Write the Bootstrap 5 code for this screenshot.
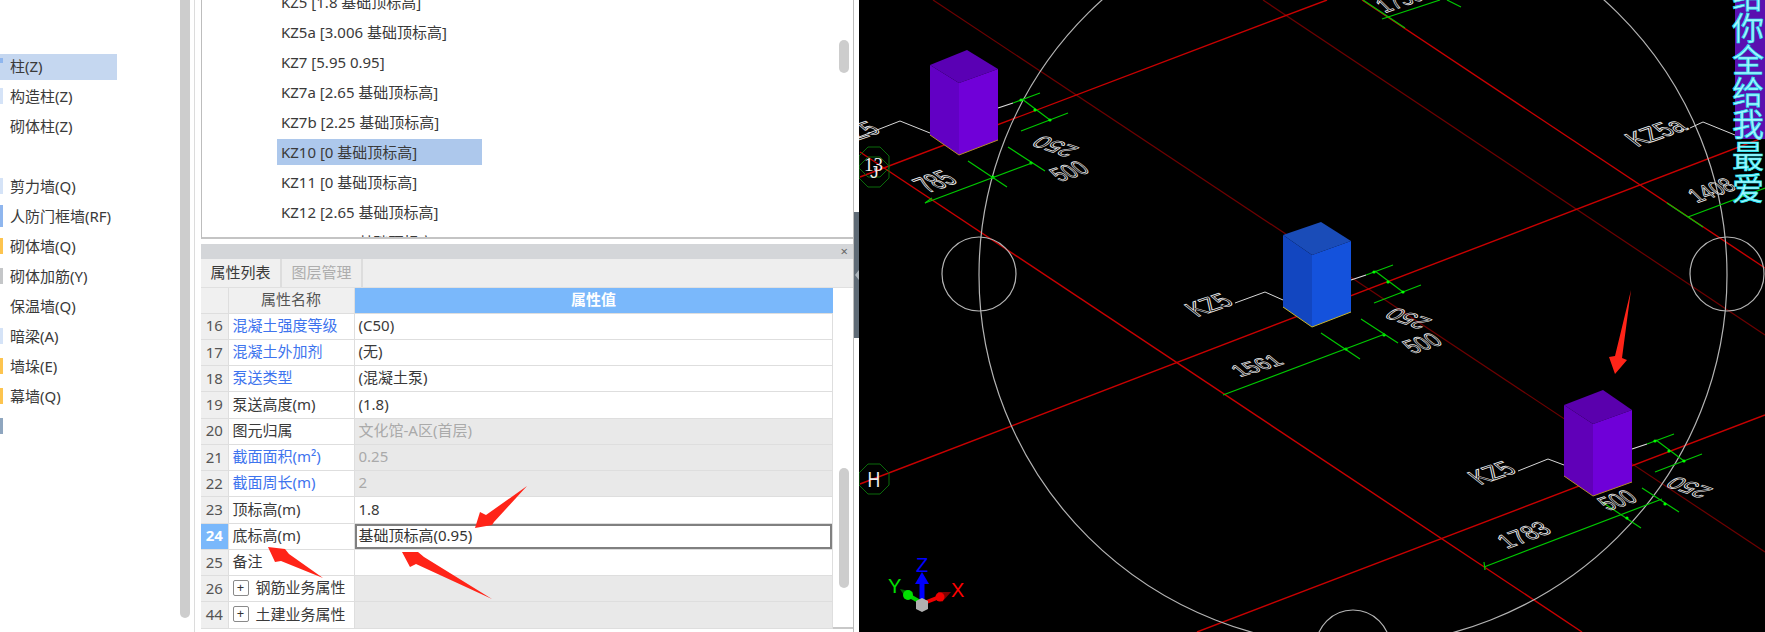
<!DOCTYPE html>
<html lang="zh">
<head>
<meta charset="utf-8">
<title>属性列表</title>
<link href="https://cdn.jsdelivr.net/npm/bootstrap@5.3.0/dist/css/bootstrap.min.css" rel="stylesheet">
<style>
html,body{height:632px;overflow:hidden;background:#fff}
body{font-family:"Noto Sans","Noto Sans CJK SC",sans-serif;font-size:15px;color:#3a3a3a;line-height:1.2}
.app{height:632px;width:1765px;position:relative}
.tree-pane{width:180px;padding-top:54px}
.tree-item{height:26px;margin-bottom:4px;width:117px;white-space:nowrap;padding-bottom:2px}
.tree-item.on{background:#c5d7f0}
.tree-gap{height:30px}
.tick{width:3px;flex:none;margin-right:7px;height:16px}
.tk-b{background:#8fb6ee}.tk-p{background:#d5e3f7}.tk-o{background:#fdc44f}.tk-g{background:#c4c6c8}.tk-s{background:#8fa6bf}.tk-n{background:transparent}
.pane-track{width:10px;height:618px;background:#cdcdcd;border-radius:0 0 5px 5px;flex:none}
.gutter{width:11px;flex:none;padding-left:4px}
.gutter-line{width:1px;height:100%;background:#dcdcdc}
.mid-pane{width:653px;flex:none;border-right:1px solid #bcbcbc;height:632px}
.list-box{height:239px;border-left:1px solid #bdbdbd;border-bottom:2px solid #c4c4c4;overflow:hidden;flex:none}
.kz-list{flex:1;margin-top:-11px;padding-left:75px}
.kz-row{height:26px;margin-bottom:4px;width:205px;padding:0 0 1px 4px;white-space:nowrap}
.kz-row.on{background:#adc8ec}
.vthumb{width:10px;background:#cdcdcd;border-radius:5px;flex:none}
.thumb-a{height:33px;margin:40px 4px 0 0}
.title-bar{height:15px;margin-top:5px;background:#d4d6d9;flex:none;padding-right:5px;font-size:13px;color:#666;line-height:15px}
.tab-bar{height:29px;background:#eee;flex:none;border-bottom:1px solid #e0e0e0}
.tab-it{width:81px;border-right:2px solid #ddd;font-size:15px;padding-bottom:2px}
.tab-it.off{color:#adadad}
.tab-it.act{color:#3a3a3a;background:#f0f0f0}
.grid-wrap{flex:none;height:341px;border-bottom:2px solid #c8c8c8}
.prop-grid{width:632px;table-layout:fixed;border-collapse:collapse;margin:0;font-size:15px;--bs-table-bg:transparent}
.prop-grid td,.prop-grid th{padding:0 4px 2px;height:26.25px;border:0;border-bottom:1px solid #dedede;border-right:1px solid #dedede;vertical-align:middle;font-weight:400;color:#3a3a3a;background:#fff;box-shadow:none;white-space:nowrap;overflow:hidden;line-height:1.1}
.prop-grid th{height:25px;text-align:center;background:#f0f0f0;color:#555}
.prop-grid th.val{background:#7ab8fb;color:#fff;font-weight:700;border-right:0}
.prop-grid .num{background:#efefef;color:#555;text-align:center;padding:0 0 1px}
.prop-grid .num.cur{background:#7ab8fb;color:#fff;font-weight:700}
.prop-grid .lnk{color:#3e74ee}
.prop-grid .dis{background:#e9e9e9;color:#aaa}
.prop-grid .cur-val{box-shadow:inset 0 0 0 2px #808080;color:#333}
.plus-box{width:16px;height:16px;border:1px solid #8a8a8a;border-radius:2px;margin:0 7px 0 0;font-size:13px;line-height:13px;text-align:center;color:#333;flex:none}
.grid-track{width:20px;padding:180px 4px 0 6px;flex:none}
.thumb-b{width:10px;height:120px;background:#cdcdcd;border-radius:5px}
.splitter{width:5px;flex:none;height:632px;padding-top:212px}
.splitter-bar{height:126px;background:#5f6b76}
.split-grip{width:0;height:0;border-style:solid;border-width:5px 4px 5px 0;border-color:transparent #aeb6bd transparent transparent}
.cad-view{width:906px;height:632px;flex:none;background:#000;display:block}
.cad-view text{font-family:"Liberation Sans",sans-serif}
.dim-txt{font-size:14px;fill:none;stroke:#eeeeee;stroke-width:.5}
.axis-txt{font-size:20px}
.banner-ch{font-family:"Noto Sans CJK SC",sans-serif!important;font-size:32px;fill:#a8f6ff;stroke:#1fe6f2;stroke-width:.7}
.arrow-layer{position:absolute;left:0;top:0;pointer-events:none}
</style>
</head>
<body>
<div class="app d-flex">
  <aside class="tree-pane flex-none">
    <div class="tree-item on d-flex align-items-center"><span class="tick tk-b" style="height:5px;margin-top:-12px"></span>柱(Z)</div>
    <div class="tree-item d-flex align-items-center"><span class="tick tk-p"></span>构造柱(Z)</div>
    <div class="tree-item d-flex align-items-center"><span class="tick tk-n"></span>砌体柱(Z)</div>
    <div class="tree-gap"></div>
    <div class="tree-item d-flex align-items-center"><span class="tick tk-p"></span>剪力墙(Q)</div>
    <div class="tree-item d-flex align-items-center"><span class="tick tk-b" style="height:22px"></span>人防门框墙(RF)</div>
    <div class="tree-item d-flex align-items-center"><span class="tick tk-o"></span>砌体墙(Q)</div>
    <div class="tree-item d-flex align-items-center"><span class="tick tk-g"></span>砌体加筋(Y)</div>
    <div class="tree-item d-flex align-items-center"><span class="tick tk-n"></span>保温墙(Q)</div>
    <div class="tree-item d-flex align-items-center"><span class="tick tk-p"></span>暗梁(A)</div>
    <div class="tree-item d-flex align-items-center"><span class="tick tk-o"></span>墙垛(E)</div>
    <div class="tree-item d-flex align-items-center"><span class="tick tk-o"></span>幕墙(Q)</div>
    <div class="tree-item d-flex align-items-center"><span class="tick tk-s"></span></div>
  </aside>
  <div class="pane-track"></div>
  <div class="gutter"><div class="gutter-line"></div></div>

  <main class="mid-pane d-flex flex-column">
    <div class="list-box d-flex">
      <div class="kz-list">
        <div class="kz-row d-flex align-items-center">KZ5 [1.8 基础顶标高]</div>
        <div class="kz-row d-flex align-items-center">KZ5a [3.006 基础顶标高]</div>
        <div class="kz-row d-flex align-items-center">KZ7 [5.95 0.95]</div>
        <div class="kz-row d-flex align-items-center">KZ7a [2.65 基础顶标高]</div>
        <div class="kz-row d-flex align-items-center">KZ7b [2.25 基础顶标高]</div>
        <div class="kz-row on d-flex align-items-center">KZ10 [0 基础顶标高]</div>
        <div class="kz-row d-flex align-items-center">KZ11 [0 基础顶标高]</div>
        <div class="kz-row d-flex align-items-center">KZ12 [2.65 基础顶标高]</div>
        <div class="kz-row d-flex align-items-center">KZ14 [0.95 基础顶标高]</div>
      </div>
      <div class="vthumb thumb-a"></div>
    </div>
    <div class="title-bar d-flex justify-content-end">×</div>
    <div class="tab-bar d-flex">
      <div class="tab-it act d-flex align-items-center justify-content-center">属性列表</div>
      <div class="tab-it off d-flex align-items-center justify-content-center">图层管理</div>
    </div>
    <div class="grid-wrap d-flex">
      <table class="table prop-grid">
        <colgroup><col style="width:27px"><col style="width:126px"><col></colgroup>
        <thead><tr><th></th><th>属性名称</th><th class="val">属性值</th></tr></thead>
        <tbody>
          <tr><td class="num">16</td><td class="lnk">混凝土强度等级</td><td>(C50)</td></tr>
          <tr><td class="num">17</td><td class="lnk">混凝土外加剂</td><td>(无)</td></tr>
          <tr><td class="num">18</td><td class="lnk">泵送类型</td><td>(混凝土泵)</td></tr>
          <tr><td class="num">19</td><td>泵送高度(m)</td><td>(1.8)</td></tr>
          <tr><td class="num">20</td><td>图元归属</td><td class="dis">文化馆-A区(首层)</td></tr>
          <tr><td class="num">21</td><td class="lnk">截面面积(m²)</td><td class="dis">0.25</td></tr>
          <tr><td class="num">22</td><td class="lnk">截面周长(m)</td><td class="dis">2</td></tr>
          <tr><td class="num">23</td><td>顶标高(m)</td><td>1.8</td></tr>
          <tr><td class="num cur">24</td><td>底标高(m)</td><td class="cur-val">基础顶标高(0.95)</td></tr>
          <tr><td class="num">25</td><td>备注</td><td></td></tr>
          <tr><td class="num">26</td><td><div class="d-flex align-items-center"><span class="plus-box">+</span>钢筋业务属性</div></td><td class="dis"></td></tr>
          <tr><td class="num">44</td><td><div class="d-flex align-items-center"><span class="plus-box">+</span>土建业务属性</div></td><td class="dis"></td></tr>
        </tbody>
      </table>
      <div class="grid-track"><div class="thumb-b"></div></div>
    </div>
  </main>
  <div class="splitter"><div class="splitter-bar d-flex align-items-center justify-content-end"><span class="split-grip"></span></div></div>

  <svg class="cad-view" viewBox="859 0 906 632" xmlns="http://www.w3.org/2000/svg">
    <defs>
      <polygon id="octa" points="-6,-15 6,-15 15,-6 15,6 6,15 -6,15 -15,6 -15,-6" fill="none" stroke="#0a6a0a" stroke-width="1"/>
      <g id="dimset" fill="none" stroke="#00c800" stroke-width="1.2">
        <path d="M998 108L1013 103" stroke="#ddd"/>
        <path d="M1013 103L1040 93M1022 99L1050 120M1021 131L1068 113"/>
        <path d="M968 161L1007 187M1008 147L1045 171"/>
        <circle cx="1021" cy="100" r="1.6" fill="#0f0" stroke="none"/>
        <circle cx="1035" cy="110" r="1.6" fill="#0f0" stroke="none"/>
        <circle cx="1050" cy="120" r="1.6" fill="#0f0" stroke="none"/>
        <circle cx="993" cy="177" r="1.6" fill="#0f0" stroke="none"/>
        <circle cx="1031" cy="163" r="1.6" fill="#0f0" stroke="none"/>
      </g>
    </defs>
    <!-- dark axis lines -->
    <g fill="none" stroke="#6e0000" stroke-width="1.2">
      <path d="M933 0L1765 552"/>
      <path d="M1263 0L1765 335"/>
    </g>
    <!-- bright axis lines -->
    <g fill="none" stroke="#c80000" stroke-width="1.4">
      <path d="M860 152L1582 632"/>
      <path d="M1362 0L1765 268"/>
      <path d="M860 484L1765 137"/>
      <path d="M860 177L1327 0"/>
      <path d="M1197 632L1765 415"/>
    </g>
    <!-- plan circles -->
    <g fill="none" stroke="#b4b4b4" stroke-width="1.2">
      <ellipse cx="1353" cy="275" rx="374" ry="371"/>
      <circle cx="979" cy="274" r="37"/>
      <circle cx="1727" cy="274" r="37"/>
      <circle cx="1353" cy="647" r="37"/>
    </g>
    <!-- axis bubbles -->
    <use href="#octa" x="874" y="162"/>
    <use href="#octa" x="874" y="172"/>
    <use href="#octa" x="874" y="479"/>
    <text x="864" y="171" font-size="19" fill="#eee" style="font-family:'Liberation Serif',serif">13</text>
    <text x="870" y="178" font-size="17" fill="#eee">J</text>
    <text transform="translate(867.5 487) scale(.8 1)" font-size="22" fill="#eee">H</text>

    <!-- dimension sets -->
    <use href="#dimset"/>
    <use href="#dimset" x="353" y="172"/>
    <use href="#dimset" x="634" y="341"/>
    <g fill="none" stroke="#00c800" stroke-width="1.2">
      <path d="M925 203L1032 163"/>
      <path d="M1223 395L1385 334"/>
      <path d="M1484 567L1662 499"/>
      <path d="M1688 217L1765 188M1667 203L1703 227"/>
      <path d="M1382 19L1440 0M1363 0L1405 28M1447 0L1461 7"/>
      <path d="M1484 562L1485 570M925 203L932 198"/>
    </g>
    <!-- leaders -->
    <g fill="none" stroke="#d8d8d8" stroke-width="1">
      <path d="M859 137L900 121L930 133"/>
      <path d="M1235 303L1265 292L1283 300"/>
      <path d="M1518 471L1548 459L1564 465"/>
      <path d="M1690 128L1703 122L1735 135"/>
    </g>
    <!-- dimension labels -->
    <g class="dims">
      <text class="dim-txt" transform="matrix(1.33 -.46 1.8 1.3 928 193)">785</text>
      <text class="dim-txt" transform="matrix(1.33 -.43 1.3 1.2 1060 182)">500</text>
      <text class="dim-txt" transform="matrix(-1.6 -.55 1.3 -1 1080 148)">250</text>
      <text class="dim-txt" transform="matrix(1.45 -.43 1.2 1 1240 377)">1561</text>
      <text class="dim-txt" transform="matrix(1.33 -.43 1.3 1.2 1413 354)">500</text>
      <text class="dim-txt" transform="matrix(-1.6 -.55 1.3 -1 1433 320)">250</text>
      <text class="dim-txt" transform="matrix(1.48 -.54 1.3 1.2 1507 549)">1783</text>
      <text class="dim-txt" transform="matrix(1.33 -.43 1.3 1.2 1608 511)">500</text>
      <text class="dim-txt" transform="matrix(-1.6 -.55 1.3 -1 1714 489)">250</text>
      <text class="dim-txt" transform="matrix(1.3 -.45 1.2 1.2 1697 203)">1408</text>
      <text class="dim-txt" transform="matrix(1.3 -.45 1.2 1.2 1385 13)">1730</text>
      <text class="dim-txt" transform="matrix(1.48 -.5 1.5 1.2 844 145)">KZ5</text>
      <text class="dim-txt" transform="matrix(1.48 -.5 1.5 1.2 1197 317)">KZ5</text>
      <text class="dim-txt" transform="matrix(1.48 -.5 1.5 1.2 1480 485)">KZ5</text>
      <text class="dim-txt" transform="matrix(1.55 -.54 1.5 1.2 1637 147)">KZ5a</text>
    </g>
    <!-- column boxes -->
    <g>
      <polygon points="967,50 930,65 959,83 998,69" fill="#5a00b4"/>
      <polygon points="930,65 959,83 959,155 930,135" fill="#6200c4"/>
      <polygon points="959,83 998,69 998,140 959,155" fill="#7000d8"/>
      <path d="M930 135L959 155L998 140" fill="none" stroke="#b58a2a" stroke-width="1"/>
      <polygon points="1321,222 1283,235 1312,255 1351,241" fill="#1a4cb8"/>
      <polygon points="1283,235 1312,255 1312,327 1283,307" fill="#1246c0"/>
      <polygon points="1312,255 1351,241 1351,312 1312,327" fill="#1452dc"/>
      <path d="M1283 307L1312 327L1351 312" fill="none" stroke="#c9b52a" stroke-width="1"/>
      <polygon points="1603,390 1564,405 1593,424 1632,410" fill="#5a00ad"/>
      <polygon points="1564,405 1593,424 1593,496 1564,476" fill="#6000b8"/>
      <polygon points="1593,424 1632,410 1632,482 1593,496" fill="#6f00d8"/>
      <path d="M1564 476L1593 496L1632 482" fill="none" stroke="#b58a2a" stroke-width="1"/>
    </g>
    <!-- axis gizmo -->
    <g>
      <path d="M922 600V577" stroke="#0000ff" stroke-width="5"/>
      <polygon points="922,572 915,584 929,584" fill="#0000ff"/>
      <path d="M922 603L908 595" stroke="#00d000" stroke-width="4"/>
      <polygon points="900,589 913,592 907,600" fill="#006800"/>
      <circle cx="908" cy="595" r="5" fill="#00e000"/>
      <path d="M924 603L942 596" stroke="#f00000" stroke-width="4"/>
      <polygon points="951,592 938,592 942,602" fill="#800000"/>
      <circle cx="940" cy="597" r="4.5" fill="#f00000"/>
      <polygon points="922,598 928,601 928,609 922,612 916,609 916,601" fill="#b0b0b0"/>
      <text x="916" y="572" class="axis-txt" fill="#0000ff">Z</text>
      <text x="888" y="593" class="axis-txt" fill="#00e000">Y</text>
      <text x="951" y="597" class="axis-txt" fill="#ff0000">X</text>
    </g>
    <!-- overlaid banner -->
    <rect x="1735" y="0" width="30" height="139" fill="#5a10b0"/>
    <g class="banner">
      <text class="banner-ch" x="1732" y="8">给</text>
      <text class="banner-ch" x="1732" y="40">你</text>
      <text class="banner-ch" x="1732" y="72">全</text>
      <text class="banner-ch" x="1732" y="104">给</text>
      <text class="banner-ch" x="1732" y="136">我</text>
      <text class="banner-ch" x="1732" y="168">最</text>
      <text class="banner-ch" x="1732" y="200">爱</text>
    </g>
  </svg>

  <svg class="arrow-layer" width="1765" height="632" viewBox="0 0 1765 632" xmlns="http://www.w3.org/2000/svg">
    <g fill="#ff2418">
      <polygon points="527,486 486,515 480,512 475,528 492,525 494,522"/>
      <polygon points="492,599 424,557 418,552 402,552 410,567 416,564"/>
      <polygon points="323,578 289,554 285,549 268,547 275,562 281,561"/>
      <polygon points="1631,290 1622,358 1627,360 1615,374 1609,357 1615,356"/>
    </g>
  </svg>
</div>
<script src="https://cdn.jsdelivr.net/npm/bootstrap@5.3.0/dist/js/bootstrap.bundle.min.js"></script>
</body>
</html>
